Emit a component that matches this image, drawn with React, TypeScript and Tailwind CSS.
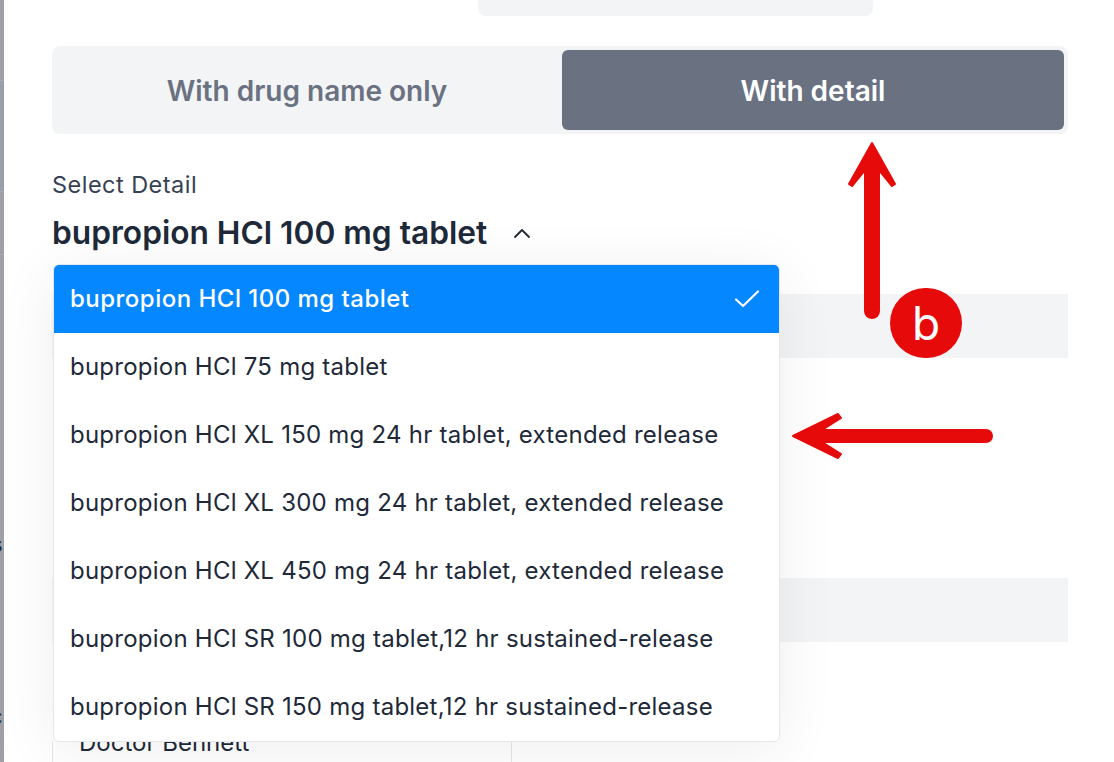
const OPTIONS = [
  "bupropion HCl 100 mg tablet",
  "bupropion HCl 75 mg tablet",
  "bupropion HCl XL 150 mg 24 hr tablet, extended release",
  "bupropion HCl XL 300 mg 24 hr tablet, extended release",
  "bupropion HCl XL 450 mg 24 hr tablet, extended release",
  "bupropion HCl SR 100 mg tablet,12 hr sustained-release",
  "bupropion HCl SR 150 mg tablet,12 hr sustained-release",
];

function DetailDropdown() {
  return (
    <div className="absolute left-[1px] top-[130px] z-10 w-[727px] overflow-hidden rounded-md border border-gray-200 bg-white shadow-[0_8px_60px_rgba(0,0,0,0.07)]">
      {OPTIONS.map((option, index) => (
        <div
          key={option}
          className={`flex h-[68px] items-center justify-between px-[16px] text-[24px] ${
            index === 0 ? "bg-[#0587ff] font-medium tracking-[0.02em] text-white" : "tracking-[0.01em] text-gray-800"
          }`}
        >
          <span>{option}</span>
          {index === 0 && (
            <svg width="26" height="20" viewBox="0 0 26 20" fill="none" className="mr-[3px]">
              <path d="M2 10.5 L9 17 L24 2.5" stroke="white" strokeWidth="2.2" strokeLinecap="round" strokeLinejoin="round" />
            </svg>
          )}
        </div>
      ))}
    </div>
  );
}

function Annotations() {
  return (
    <>
      <svg width="60" height="182" viewBox="0 0 60 182" fill="#e60a0a" stroke="#e60a0a" strokeWidth="2" strokeLinejoin="round" className="absolute left-[842px] top-[140px] z-20">
        <path d="M30 3 L53 44 L50 46 L37 30 V171 A7 7 0 0 1 23 171 V30 L10 46 L7 44 Z" />
      </svg>
      <svg width="210" height="60" viewBox="0 0 210 60" fill="#e60a0a" stroke="#e60a0a" strokeWidth="2" strokeLinejoin="round" className="absolute left-[788px] top-[406px] z-20">
        <path d="M5 30 L50 8 L53 12 L34 24 H198 A6 6 0 0 1 198 36 H34 L53 48 L50 52 Z" />
      </svg>
      <div className="absolute left-[890px] top-[288px] z-20 flex h-[70px] w-[72px] items-center justify-center rounded-full bg-[#e60a0a] text-[46px] leading-none text-white">
        b
      </div>
    </>
  );
}

function LeftEdge() {
  return (
    <div className="relative h-full w-[4px] shrink-0 overflow-hidden bg-[#9ea0a5] text-[22px] text-gray-800">
      <div className="mt-[80px] h-[112px] border-y border-[#a9abb0] bg-[#989eaa]" />
      <div className="mt-[62px] h-px bg-[#aaacb1]" />
      <span className="absolute left-[-10px] top-[352px]">/</span>
      <span className="absolute left-[-9px] top-[528px]">s</span>
      <span className="absolute left-[-10px] top-[700px]">c</span>
      <span className="absolute left-[-7px] top-[730px]">t</span>
    </div>
  );
}

export default function App() {
  return (
    <div className="relative flex h-[762px] w-[1114px] overflow-hidden bg-white font-['Inter',sans-serif]">
      <LeftEdge />
      <main className="flex h-[762px] flex-1 flex-col overflow-hidden pl-[48px] pr-[46px]">
        <div className="ml-[426px] h-[16px] w-[395px] shrink-0 rounded-b-lg bg-gray-100" />

        <div className="mt-[30px] grid h-[88px] shrink-0 grid-cols-[506px_1fr] rounded-lg bg-gray-100 p-[4px]">
          <div className="flex items-center justify-center pr-[4px] pt-[2px] text-[28px] font-semibold text-gray-500">
            With drug name only
          </div>
          <div className="flex items-center justify-center rounded-md bg-gray-500 pt-[2px] text-[28px] font-semibold text-white">
            With detail
          </div>
        </div>

        <div className="relative shrink-0">
          <p className="mt-[36px] text-[23.5px] leading-[30px] tracking-[0.02em] text-gray-700">Select Detail</p>
          <div className="mt-[13px] flex h-[40px] items-center gap-[26px] text-[31.7px] font-semibold text-gray-800">
            <span>bupropion HCl 100 mg tablet</span>
            <svg width="18" height="12" viewBox="0 0 18 12" fill="none">
              <path d="M2 10 L9 3 L16 10" stroke="#1f2937" strokeWidth="1.8" strokeLinecap="round" strokeLinejoin="round" />
            </svg>
          </div>
          <DetailDropdown />
        </div>

        <div className="mt-[41px] h-[64px] shrink-0 bg-gray-100" />
        <div className="mt-[220px] h-[64px] shrink-0 bg-gray-100" />

        <div className="mt-[99px] flex h-[40px] shrink-0 border-l border-gray-200">
          <div className="w-[459px] border-r border-gray-200 pl-[26px] text-[24px] leading-[32px] text-gray-800">
            <div className="mt-[-14px]">Doctor Bennett</div>
          </div>
        </div>
      </main>
      <Annotations />
    </div>
  );
}
